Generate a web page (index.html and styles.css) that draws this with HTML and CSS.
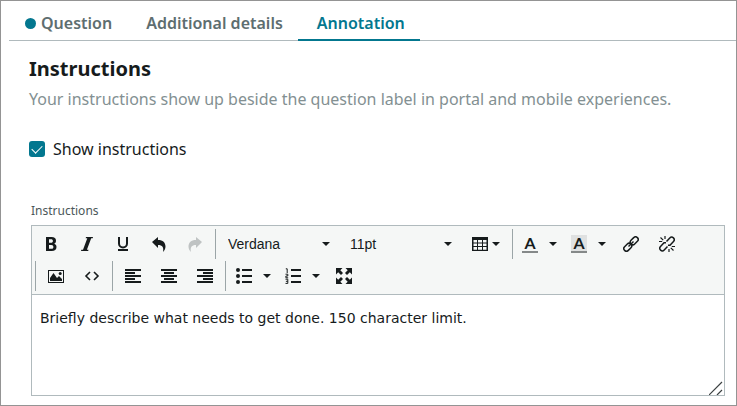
FILE: index.html
```html
<!DOCTYPE html>
<html lang="en">
<head>
    <meta charset="UTF-8">
    <meta name="viewport" content="width=device-width, initial-scale=1.0">
    <title>Question - Annotation</title>
    <link rel="stylesheet" href="styles.css">
</head>
<body>
    <nav class="tabs">
        <a href="#question" class="tab changed">Question</a>
        <a href="#details" class="tab">Additional details</a>
        <a href="#annotation" class="tab active" aria-current="page">Annotation</a>
    </nav>

    <main class="panel">
        <h1>Instructions</h1>
        <p class="hint">Your instructions show up beside the question label in portal and mobile experiences.</p>

        <label class="check">
            <input type="checkbox" checked>
            Show instructions
        </label>

        <label class="field-label" for="instructions">Instructions</label>
        <div class="editor">
            <div class="toolbar">
                <div class="row">
                    <div class="group">
                        <button type="button" aria-label="Bold">
                            <svg width="16" height="16" viewBox="0 0 16 16"><path fill-rule="evenodd" d="M3 1h5.500c3 0 4.500 1.300 4.500 3.700 0 1.500-.7 2.500-1.800 3 1.500.4 2.300 1.600 2.300 3.200 0 2.700-1.700 4.100-4.800 4.100H3zM6 3.200v3.500h2c1.300 0 1.900-.6 1.900-1.800S9.300 3.200 8 3.200zM6 8.900v3.900h2.300c1.400 0 2.100-.6 2.100-1.900s-.7-2-2.100-2z"/></svg>
                        </button>
                        <button type="button" aria-label="Italic">
                            <svg width="16" height="16" viewBox="0 0 16 16"><path d="M7 1h7l-.3 1.200h-1.500L7.900 13.800h1.600L9.200 15H2l.3-1.200H4L8.300 2.200H6.700z"/></svg>
                        </button>
                        <button type="button" aria-label="Underline">
                            <svg width="16" height="16" viewBox="0 0 16 16"><path d="M4 1v6.500a4 4 0 0 0 8 0V1" fill="none" stroke="currentColor" stroke-width="2"/><path d="M3 13h10v2H3z"/></svg>
                        </button>
                        <button type="button" aria-label="Undo">
                            <svg width="16" height="16" viewBox="0 0 16 16"><path d="M1 6l6-5v3c5 0 7.500 2.700 7.500 6.500 0 2.200-.9 4-2.500 5.500 1-4.500-.6-7-5-7v3z"/></svg>
                        </button>
                        <button type="button" aria-label="Redo" disabled>
                            <svg width="16" height="16" viewBox="0 0 16 16"><path d="M15 6L9 1v3C4 4 1.500 6.700 1.500 10.500c0 2.200.9 4 2.500 5.500-1-4.500.6-7 5-7v3z"/></svg>
                        </button>
                    </div>
                    <div class="group">
                        <div class="dropdown">
                            <select aria-label="Font family">
                                <option>Verdana</option>
                                <option>Arial</option>
                            </select>
                        </div>
                        <div class="dropdown">
                            <select aria-label="Font size">
                                <option>11pt</option>
                                <option>12pt</option>
                            </select>
                        </div>
                        <button type="button" class="table-button" aria-label="Table">
                            <svg width="16" height="16" viewBox="0 0 16 16"><path fill-rule="evenodd" d="M0 1h16v14H0zM1.500 4v2.500H5V4zM6 4v2.500h4V4zM11 4v2.500h3.500V4zM1.500 7.500V10H5V7.500zM6 7.500V10h4V7.500zM11 7.500V10h3.500V7.500zM1.500 11v2.700H5V11zM6 11v2.700h4V11zM11 11v2.700h3.500V11z"/></svg>
                            <span class="caret"></span>
                        </button>
                    </div>
                    <div class="group">
                        <button type="button" class="split" aria-label="Text color">
                            <span class="swatch">A</span>
                            <span class="caret"></span>
                        </button>
                        <button type="button" class="split" aria-label="Background color">
                            <span class="swatch filled">A</span>
                            <span class="caret"></span>
                        </button>
                        <button type="button" aria-label="Insert link">
                            <svg width="16" height="16" viewBox="0 0 16 16" fill="none" stroke="currentColor" stroke-width="1.500"><rect x="-4.500" y="-2.600" width="9" height="5.200" rx="2.600" transform="translate(4.800 11.200) rotate(-45)"/><rect x="-4.500" y="-2.600" width="9" height="5.200" rx="2.600" transform="translate(11.200 4.800) rotate(-45)"/><path d="M5.500 10.500l5-5"/></svg>
                        </button>
                        <button type="button" aria-label="Remove link">
                            <svg width="16" height="16" viewBox="0 0 16 16" fill="none" stroke="currentColor" stroke-width="1.500"><path d="M7.500 5.500l3.300-3.500a2.500 2.500 0 0 1 3.700 3.500L11 9.300 9 9.200M8.500 10.500L5.200 14a2.500 2.500 0 0 1-3.700-3.500L5 6.700l2 .1"/><path d="M0 5.500h3.200M1.500 1.500l2.700 2.700M6 0v3M16 10.500h-3.200M14.500 14.500l-2.700-2.700M10 16v-3" stroke-width="1.200"/></svg>
                        </button>
                    </div>
                </div>
                <div class="row">
                    <div class="group">
                        <button type="button" aria-label="Insert image">
                            <svg width="16" height="16" viewBox="0 0 16 16"><path fill-rule="evenodd" d="M0 2h16v13H0zM1 3v11h14V3z"/><path d="M2 13v-3l3.500-5L9 10l2-2 3 3v2z"/><circle cx="12.200" cy="5.500" r="1.500"/></svg>
                        </button>
                        <button type="button" aria-label="Source code">
                            <svg width="16" height="16" viewBox="0 0 16 16" fill="none" stroke="currentColor" stroke-width="1.600"><path d="M6 4L2 8l4 4M10 4l4 4-4 4"/></svg>
                        </button>
                    </div>
                    <div class="group">
                        <button type="button" aria-label="Align left">
                            <svg width="16" height="16" viewBox="0 0 16 16"><path d="M0 1h16v2H0zM0 4h10v2H0zM0 7h16v2H0zM0 10h10v2H0zM0 13h16v2H0z"/></svg>
                        </button>
                        <button type="button" aria-label="Align center">
                            <svg width="16" height="16" viewBox="0 0 16 16"><path d="M0 1h16v2H0zM3 4h10v2H3zM0 7h16v2H0zM3 10h10v2H3zM0 13h16v2H0z"/></svg>
                        </button>
                        <button type="button" aria-label="Align right">
                            <svg width="16" height="16" viewBox="0 0 16 16"><path d="M0 1h16v2H0zM6 4h10v2H6zM0 7h16v2H0zM6 10h10v2H6zM0 13h16v2H0z"/></svg>
                        </button>
                    </div>
                    <div class="group">
                        <button type="button" class="split" aria-label="Bullet list">
                            <svg width="16" height="16" viewBox="0 0 16 16"><circle cx="2" cy="2" r="2"/><circle cx="2" cy="8" r="2"/><circle cx="2" cy="14" r="2"/><path d="M6 1h10v2H6zM6 7h10v2H6zM6 13h10v2H6z"/></svg>
                            <span class="caret"></span>
                        </button>
                        <button type="button" class="split" aria-label="Numbered list">
                            <svg width="16" height="16" viewBox="0 0 16 16"><path d="M6 1h10v2H6zM6 7h10v2H6zM6 13h10v2H6z"/><path d="M.8.8h1.400V5M.5 6.200h2.300V8H.9v1.800h2.300M.5 11.200h2.300v4.200H.5M.9 13.300h1.900" fill="none" stroke="currentColor"/></svg>
                            <span class="caret"></span>
                        </button>
                        <button type="button" aria-label="Full screen">
                            <svg width="16" height="16" viewBox="0 0 16 16"><path d="M0 0h6.500L4.300 2.200 7 5 5 7 2.200 4.300 0 6.500zM16 0v6.500l-2.200-2.200L11 7 9 5l2.700-2.800L9.500 0zM16 16H9.500l2.200-2.200L9 11l2-2 2.800 2.700L16 9.500zM0 16V9.500l2.200 2.200L5 9l2 2-2.700 2.800L6.500 16z"/></svg>
                        </button>
                    </div>
                </div>
            </div>
            <textarea id="instructions">Briefly describe what needs to get done. 150 character limit.</textarea>
            <svg class="grip" width="14" height="14" viewBox="0 0 14 14" stroke="currentColor" stroke-width="1.200"><path d="M0 14L13 1M8 14l5-5"/></svg>
        </div>
    </main>
</body>
</html>
```
FILE: styles.css
```css
* {
    box-sizing: border-box;
}

body {
    margin: 0;
    min-height: 100vh;
    border: 1px solid #949494;
    background: #fff;
    color: #161b1c;
    font-family: "Noto Sans", sans-serif;
    font-size: 16px;
    line-height: 24px;
}

/* Tabs */
.tabs {
    display: flex;
    height: 40px;
    margin-left: 8px;
    border-bottom: 1px solid #b0babd;
}

.tab {
    display: flex;
    align-items: center;
    height: 40px;
    padding: 6px 15px 0 19px;
    border-bottom: 2px solid transparent;
    color: #5e6e70;
    font-weight: 600;
    text-decoration: none;
}

.tab.changed {
    padding-left: 16px;
}

.tab.changed::before {
    content: '';
    width: 11px;
    height: 11px;
    margin-right: 5px;
    border-radius: 50%;
    background: #03778f;
}

.tab.active {
    border-color: #03778f;
    color: #03778f;
}

/* Panel */
.panel {
    padding: 16px 11px 9px 28px;
}

h1 {
    margin: 0;
    font-size: 20px;
    font-weight: 700;
    line-height: 24px;
}

.hint {
    margin: 6px 0 0;
    color: #839092;
}

.check {
    display: flex;
    align-items: center;
    gap: 8px;
    margin-top: 26px;
}

.check input {
    display: grid;
    place-items: center;
    appearance: none;
    width: 16px;
    height: 16px;
    margin: 0;
    border-radius: 3px;
    background: #03778f;
}

.check input:not(:checked) {
    border: 1px solid #839092;
    background: #fff;
}

.check input:checked::after {
    content: '';
    width: 5px;
    height: 9px;
    margin-bottom: 3px;
    border: solid #fff;
    border-width: 0 1px 1px 0;
    transform: rotate(45deg);
}

.field-label {
    display: block;
    margin: 42px 0 6px 2px;
    color: #4b5759;
    font-size: 12px;
    line-height: 16px;
}

/* Editor */
.editor {
    position: relative;
    margin-left: 2px;
    border: 1px solid #b0babd;
}

.toolbar {
    padding: 3px 0;
    border-bottom: 1px solid #b0babd;
    background: #f5f7f6;
}

.row {
    display: flex;
}

.row + .row {
    margin: 2px 0 0 3px;
}

.group {
    display: flex;
    height: 30px;
    padding: 0 2px;
}

.group + .group,
.row + .row .group {
    border-left: 1px solid #9ba5a7;
}

.row:first-child .group:first-child {
    padding-left: 1px;
}

.toolbar button {
    display: flex;
    align-items: center;
    justify-content: center;
    width: 36px;
    padding: 0;
    border: 0;
    background: none;
    color: #161b1c;
}

.toolbar button:disabled {
    color: #bfc3c3;
}

.toolbar svg {
    display: block;
    fill: currentColor;
}

.toolbar svg[fill="none"] {
    fill: none;
}

.toolbar .split {
    justify-content: flex-start;
    gap: 11px;
    width: 49px;
    padding-left: 7px;
}

.row + .row .split {
    padding-left: 8px;
}

.toolbar .table-button {
    gap: 4px;
    width: 48px;
}

.caret,
.dropdown::after {
    border: 4px solid transparent;
    border-top-color: #161b1c;
    border-bottom: 0;
}

.dropdown {
    position: relative;
    width: 122px;
}

.dropdown::after {
    content: '';
    position: absolute;
    top: 13px;
    right: 10px;
    pointer-events: none;
}

.dropdown select {
    appearance: none;
    width: 100%;
    height: 30px;
    padding: 0 10px;
    border: 0;
    background: none;
    color: #161b1c;
    font-family: "Liberation Sans", Arial, sans-serif;
    font-size: 14px;
}

.swatch {
    width: 16px;
    height: 18px;
    border-bottom: 2px solid #858989;
    font-family: Lato, sans-serif;
    font-size: 16px;
    font-weight: 700;
    line-height: 16px;
}

.swatch.filled {
    background: #dfe1e1;
}

textarea {
    display: block;
    width: 100%;
    height: 100px;
    padding: 14px 8px;
    border: 0;
    outline: 0;
    background: #fff;
    color: #161b1c;
    font-family: Verdana, "DejaVu Sans", sans-serif;
    font-size: 14px;
    line-height: 18px;
    resize: none;
}

.grip {
    position: absolute;
    right: 1px;
    bottom: 0;
    color: #3c4142;
    pointer-events: none;
}
```
